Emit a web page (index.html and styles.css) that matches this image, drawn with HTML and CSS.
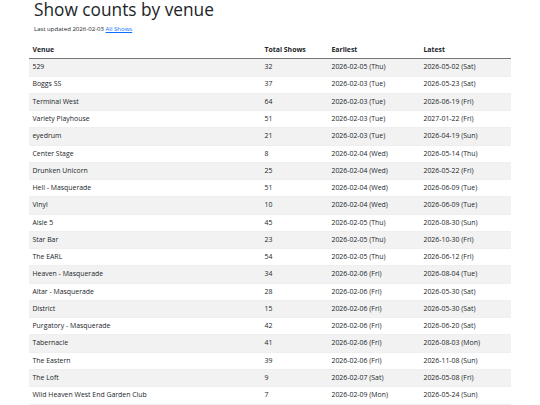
FILE: index.html
```html
<!DOCTYPE html>
<html>
<head>
<meta charset="utf-8">
<link rel="stylesheet" href="styles.css">
</head>
<body>
<div class="container">
  <h1 class="title">Show counts by venue</h1>
  <p class="updated">Last updated 2026-02-03 <a href="#">All Shows</a></p>
  <table class="venues">
    <thead>
      <tr><th class="c-venue">Venue</th><th class="c-total">Total Shows</th><th class="c-early">Earliest</th><th class="c-late">Latest</th></tr>
    </thead>
    <tbody>
      <tr><td>529</td><td>32</td><td>2026-02-05 (Thu)</td><td>2026-05-02 (Sat)</td></tr>
      <tr><td>Boggs SS</td><td>37</td><td>2026-02-03 (Tue)</td><td>2026-05-23 (Sat)</td></tr>
      <tr><td>Terminal West</td><td>64</td><td>2026-02-03 (Tue)</td><td>2026-06-19 (Fri)</td></tr>
      <tr><td>Variety Playhouse</td><td>51</td><td>2026-02-03 (Tue)</td><td>2027-01-22 (Fri)</td></tr>
      <tr><td>eyedrum</td><td>21</td><td>2026-02-03 (Tue)</td><td>2026-04-19 (Sun)</td></tr>
      <tr><td>Center Stage</td><td>8</td><td>2026-02-04 (Wed)</td><td>2026-05-14 (Thu)</td></tr>
      <tr><td>Drunken Unicorn</td><td>25</td><td>2026-02-04 (Wed)</td><td>2026-05-22 (Fri)</td></tr>
      <tr><td>Hell - Masquerade</td><td>51</td><td>2026-02-04 (Wed)</td><td>2026-06-09 (Tue)</td></tr>
      <tr><td>Vinyl</td><td>10</td><td>2026-02-04 (Wed)</td><td>2026-06-09 (Tue)</td></tr>
      <tr><td>Aisle 5</td><td>45</td><td>2026-02-05 (Thu)</td><td>2026-08-30 (Sun)</td></tr>
      <tr><td>Star Bar</td><td>23</td><td>2026-02-05 (Thu)</td><td>2026-10-30 (Fri)</td></tr>
      <tr><td>The EARL</td><td>54</td><td>2026-02-05 (Thu)</td><td>2026-06-12 (Fri)</td></tr>
      <tr><td>Heaven - Masquerade</td><td>34</td><td>2026-02-06 (Fri)</td><td>2026-08-04 (Tue)</td></tr>
      <tr><td>Altar - Masquerade</td><td>28</td><td>2026-02-06 (Fri)</td><td>2026-05-30 (Sat)</td></tr>
      <tr><td>District</td><td>15</td><td>2026-02-06 (Fri)</td><td>2026-05-30 (Sat)</td></tr>
      <tr><td>Purgatory - Masquerade</td><td>42</td><td>2026-02-06 (Fri)</td><td>2026-06-20 (Sat)</td></tr>
      <tr><td>Tabernacle</td><td>41</td><td>2026-02-06 (Fri)</td><td>2026-08-03 (Mon)</td></tr>
      <tr><td>The Eastern</td><td>39</td><td>2026-02-06 (Fri)</td><td>2026-11-08 (Sun)</td></tr>
      <tr><td>The Loft</td><td>9</td><td>2026-02-07 (Sat)</td><td>2026-05-08 (Fri)</td></tr>
      <tr><td>Wild Heaven West End Garden Club</td><td>7</td><td>2026-02-09 (Mon)</td><td>2026-05-24 (Sun)</td></tr>
    </tbody>
  </table>
</div>
</body>
</html>
```

FILE: styles.css
```css
html, body {
  margin: 0;
  padding: 0;
  background: #ffffff;
}
body {
  font-family: "Open Sans", "Noto Sans", sans-serif;
  color: #212529;
  font-size: 6.912px;
  line-height: 10.368px;
}
.container {
  width: 482px;
  margin: 0 auto;
}
.title {
  margin: 0 0 3.456px 0;
  font-size: 17.28px;
  font-weight: 400;
  line-height: 20.736px;
  padding-left: 5px;
}
.updated {
  margin: 0 0 6.912px 0;
  font-size: 6.05px;
  padding-left: 5px;
}
.updated a {
  color: #0d6efd;
  text-decoration: underline;
}
.venues {
  width: 100%;
  border-collapse: collapse;
  table-layout: fixed;
}
.venues tr {
  height: 17.28px;
}
.venues th, .venues td {
  box-sizing: border-box;
  text-align: left;
  vertical-align: middle;
  padding: 0 3.456px;
  line-height: 10.368px;
  border-bottom: 1px solid #eeeff1;
  white-space: nowrap;
}
.venues th {
  font-weight: 700;
  border-bottom: 1px solid #74777a;
}
.c-venue { width: 232px; }
.c-total { width: 67px; }
.c-early { width: 92px; }
.venues tbody tr:nth-child(odd) td {
  background: #f2f2f2;
}
```
